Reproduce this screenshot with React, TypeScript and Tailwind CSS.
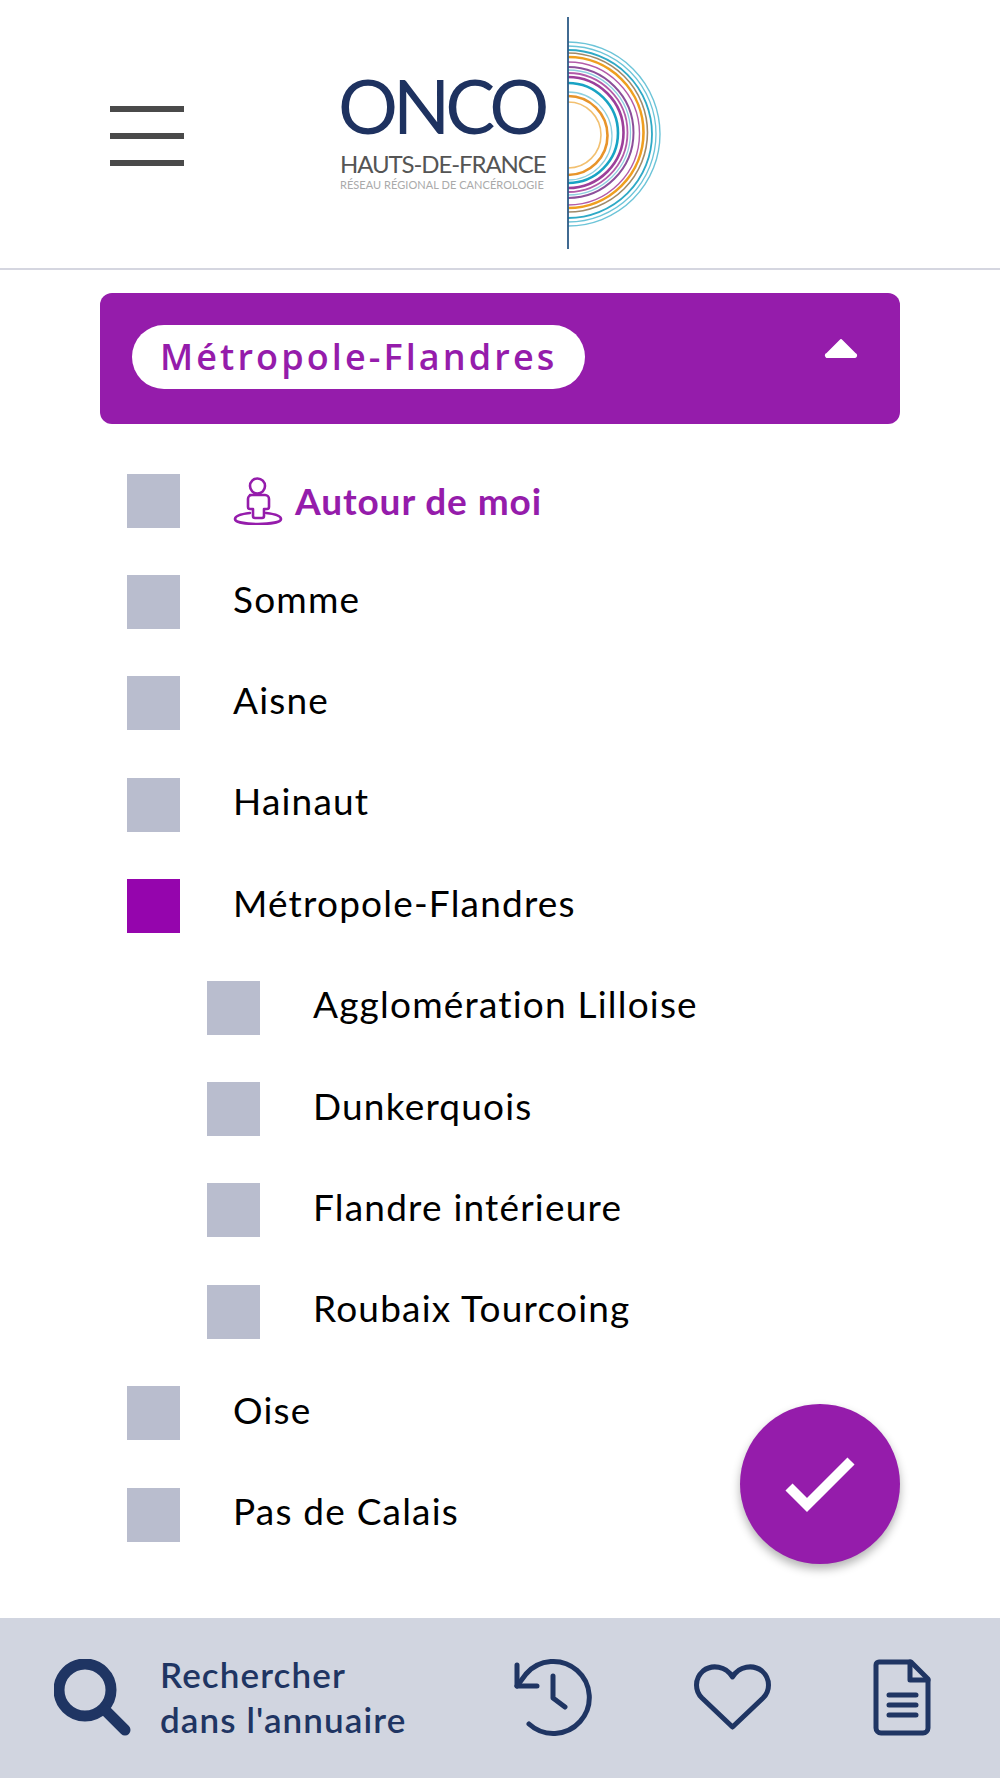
const purple = 'text-[#951cab]';

// top / bottom of each half ring, measured on the vertical bar of the logo
const arcs = [
  { t: 42, b: 226, c: '#6cc4d8', w: 1.4 },
  { t: 46, b: 222, c: '#6cc4d8', w: 1.3 },
  { t: 50, b: 218, c: '#2fa9c6', w: 1.8 },
  { t: 53, b: 212, c: '#a08a6a', w: 1.6 },
  { t: 57, b: 208, c: '#ef9f1f', w: 2.6 },
  { t: 62, b: 205, c: '#b25ba8', w: 1.4 },
  { t: 67, b: 198, c: '#8d4f9a', w: 2 },
  { t: 70, b: 195, c: '#8fd0e0', w: 1.3 },
  { t: 73, b: 192, c: '#b25ba8', w: 1.8 },
  { t: 77, b: 188, c: '#9c3f9a', w: 2.6 },
  { t: 83, b: 183, c: '#19a3c4', w: 2.6 },
  { t: 92, b: 180, c: '#8fd0e0', w: 1.3 },
  { t: 96, b: 175, c: '#e8942a', w: 2.6 },
  { t: 102, b: 168, c: '#f2c070', w: 1.6 },
];

function LogoArcs() {
  return (
    <svg viewBox="560 10 110 250" className="w-[110px] h-[250px] shrink-0 mt-[2px]" fill="none">
      {arcs.map((a) => {
        const r = (a.b - a.t) / 2;
        return <path key={a.t} d={`M568 ${a.t}A${r} ${r} 0 0 1 568 ${a.b}`} stroke={a.c} strokeWidth={a.w} />;
      })}
      <path d="M568 17V249" stroke="#2c5a86" strokeWidth="1.8" />
    </svg>
  );
}

function AroundIcon() {
  return (
    <svg viewBox="0 0 50 48" className="w-[50px] h-[48px]" fill="none" stroke="#951cab" strokeWidth="2.6" strokeLinecap="round" strokeLinejoin="round">
      <circle cx="24.5" cy="9" r="7.5" />
      <path d="M17 18h15a4 4 0 0 1 4 4v8a2 2 0 0 1-2 2h-3v7a2 2 0 0 1-2 2h-7a2 2 0 0 1-2-2v-7h-3a2 2 0 0 1-2-2v-8a4 4 0 0 1 4-4z" />
      <path d="M17 36C8 37 2 39 2 42c0 3 10 5 23 5s23-2 23-5c0-3-6-5-15-6" />
    </svg>
  );
}

function Row({ label, nested, checked }: { label: string; nested?: boolean; checked?: boolean }) {
  return (
    <div className={`flex items-center h-[101.4px] ${nested ? 'pl-[80px]' : ''}`}>
      <div className={`w-[53px] h-[54px] shrink-0 ${checked ? 'bg-[#9505ad]' : 'bg-[#b9bdce]'}`} />
      <span className="ml-[53px] mb-[8px] text-[37px] leading-none tracking-[1.2px] text-black">{label}</span>
    </div>
  );
}

export default function App() {
  return (
    <div className="relative flex flex-col w-full h-[1778px] bg-white overflow-hidden font-['Lato',sans-serif]">
      <header className="flex items-center h-[270px] shrink-0 border-b-2 border-[#d5d6e0] pl-[110px]">
        <div className="flex flex-col gap-[21px] w-[74px] mt-[4px]">
          <div className="h-[6px] bg-[#4a4a4a]" />
          <div className="h-[6px] bg-[#4a4a4a]" />
          <div className="h-[6px] bg-[#4a4a4a]" />
        </div>
        <div className="ml-[156px] w-[220px] shrink-0 flex flex-col -mt-[10px]">
          <span className="-ml-[2px] text-[75px] leading-[76px] text-[#1e3260] tracking-[-5px]">ONCO</span>
          <span className="mt-[8px] text-[24px] leading-[26px] text-[#555] tracking-[-1.1px] whitespace-nowrap">HAUTS-DE-FRANCE</span>
          <span className="mt-[1px] text-[11px] leading-[14px] tracking-[0.05px] text-[#aaa] whitespace-nowrap">RÉSEAU RÉGIONAL DE CANCÉROLOGIE</span>
        </div>
        <LogoArcs />
      </header>

      <main className="flex-1 px-[100px] pt-[23px]">
        <div className="flex items-center justify-between h-[131px] bg-[#951cab] rounded-[12px] pl-[32px] pr-[42px]">
          <div className="flex items-center h-[64px] -mt-[3px] px-[28px] bg-white rounded-full">
            <span className={`text-[36px] font-semibold tracking-[3.1px] ${purple} font-['Open_Sans',sans-serif]`}>Métropole-Flandres</span>
          </div>
          <svg viewBox="0 0 34 20" className="w-[34px] h-[20px] -mt-[21px]">
            <path d="M17 2L31 16a1.5 1.5 0 0 1-1 3H4a1.5 1.5 0 0 1-1-3z" fill="#fff" stroke="#fff" strokeLinejoin="round" strokeWidth="2" />
          </svg>
        </div>

        <div className="mt-[26px] pl-[27px]">
          <div className="flex items-center h-[101.4px]">
            <div className="w-[53px] h-[54px] shrink-0 bg-[#b9bdce]" />
            <div className="ml-[53px] flex items-center gap-[12px]">
              <AroundIcon />
              <span className={`text-[37px] leading-none font-bold tracking-[0.9px] ${purple}`}>Autour de moi</span>
            </div>
          </div>
          <Row label="Somme" />
          <Row label="Aisne" />
          <Row label="Hainaut" />
          <Row label="Métropole-Flandres" checked />
          <Row label="Agglomération Lilloise" nested />
          <Row label="Dunkerquois" nested />
          <Row label="Flandre intérieure" nested />
          <Row label="Roubaix Tourcoing" nested />
          <Row label="Oise" />
          <Row label="Pas de Calais" />
        </div>
      </main>

      <button className="absolute left-[740px] top-[1404px] flex items-center justify-center w-[160px] h-[160px] rounded-full bg-[#951cab] shadow-[0_5px_10px_rgba(0,0,0,0.3)]">
        <svg viewBox="0 0 160 160" className="w-[160px] h-[160px]" fill="none" stroke="#fff" strokeWidth="10">
          <path d="M49 83L67 101L111 57" />
        </svg>
      </button>

      <footer className="flex items-center h-[160px] shrink-0 bg-[#d1d5e0] pl-[54px] text-[#1f3563]">
        <svg viewBox="0 0 77 77" className="w-[77px] h-[77px] -mt-[2px]" fill="none" stroke="#1f3563">
          <circle cx="31" cy="31" r="26" strokeWidth="11" />
          <path d="M52 52L71 71" strokeWidth="11" strokeLinecap="round" />
        </svg>
        <div className="ml-[29px] w-[324px] text-[35px] leading-[45px] tracking-[1.1px] font-semibold -mt-[2px]">
          Rechercher<br />dans l'annuaire
        </div>
        <svg viewBox="0 0 80 80" className="ml-[29px] w-[80px] h-[80px] -mt-[1px]" fill="none" stroke="#1f3563" strokeWidth="5" strokeLinecap="round" strokeLinejoin="round">
          <path d="M4 7V28H24" />
          <path d="M4 28L13 16A36 36 0 1 1 16 66" />
          <path d="M40 18V40L52 49" />
        </svg>
        <svg viewBox="0 0 77 67" className="ml-[101px] w-[77px] h-[67px] -mt-[3px]" fill="none" stroke="#1f3563" strokeWidth="5" strokeLinejoin="round">
          <path d="M38.5 14C32 3 18 1 9 8C0 16 1 28 8 35L38.5 64L69 35C76 28 77 16 68 8C59 1 45 3 38.5 14Z" />
        </svg>
        <svg viewBox="0 0 58 77" className="ml-[102px] w-[58px] h-[77px] -mt-[2px]" fill="none" stroke="#1f3563" strokeWidth="5" strokeLinecap="round" strokeLinejoin="round">
          <path d="M6 3H38L55 20V69a5 5 0 0 1-5 5H8a5 5 0 0 1-5-5V6a3 3 0 0 1 3-3z" />
          <path d="M37 3V21H55" />
          <path d="M16 36H43M16 46H43M16 56H43" />
        </svg>
      </footer>
    </div>
  );
}
